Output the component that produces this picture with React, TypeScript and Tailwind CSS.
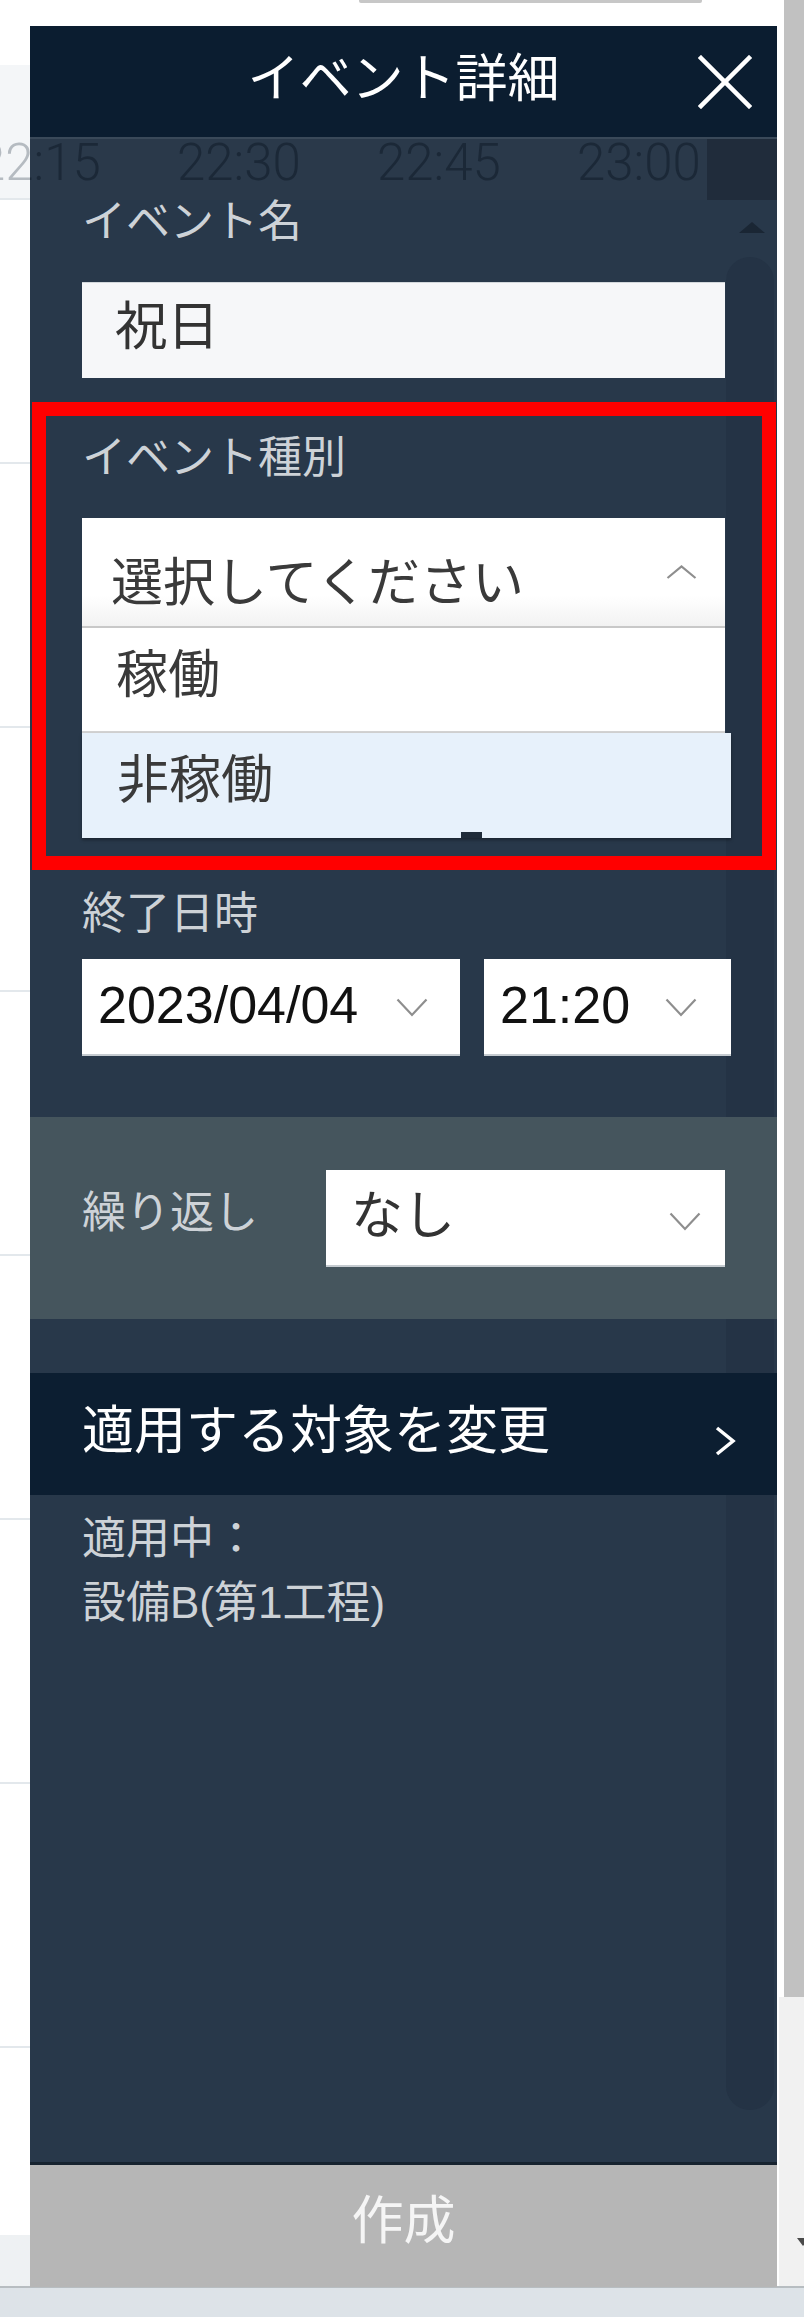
import React from "react";

const JP = "font-['Liberation_Sans','Noto_Sans_CJK_JP',sans-serif]";

function ChevDown({ className = "" }: { className?: string }) {
  return (
    <svg width="32" height="19" viewBox="0 0 32 19" className={`shrink-0 ${className}`}>
      <polyline points="1.5,1.5 16,17 30.5,1.5" fill="none" stroke="#8e8e8e" strokeWidth="2.2" />
    </svg>
  );
}

function ChevUp({ className = "" }: { className?: string }) {
  return (
    <svg width="31" height="14" viewBox="0 0 31 14" className={`shrink-0 ${className}`}>
      <polyline points="1.5,13 15.5,1.5 29.5,13" fill="none" stroke="#8e8e8e" strokeWidth="2.2" />
    </svg>
  );
}

function PageRow() {
  return <div className="h-[264px] shrink-0 border-b-2 border-[#e3e8ec]" />;
}

export default function App() {
  return (
    <div className={`relative h-[2317px] w-[804px] overflow-hidden bg-white ${JP}`}>
      {/* page behind the drawer */}
      <div className="flex h-[2286px]">
        <div className="flex min-w-0 flex-1 flex-col">
          <div className="h-[65px] shrink-0">
            <div className="ml-[359px] h-[3px] w-[343px] rounded-b-[2px] bg-[#c7c7c7]" />
          </div>
          <div className="h-[135px] shrink-0 overflow-hidden border-b-2 border-[#e3e8ec] bg-[#f4f6f8]">
            <div className="-ml-[23px] mt-[72px] flex font-['Roboto',sans-serif] text-[51px] font-light leading-[51px] text-[#b5bbc1]">
              <span className="w-[200px] shrink-0">22:15</span>
              <span className="w-[200px] shrink-0">22:30</span>
              <span className="w-[200px] shrink-0">22:45</span>
              <span className="w-[200px] shrink-0">23:00</span>
            </div>
          </div>
          <PageRow />
          <PageRow />
          <PageRow />
          <PageRow />
          <PageRow />
          <PageRow />
          <PageRow />
          <div className="h-[187px] shrink-0" />
          <div className="flex-1 bg-[#eef1f3]" />
        </div>
        <div className="flex w-[27px] shrink-0 flex-col">
          <div className="flex h-[1997px] shrink-0">
            <div className="w-[7px] bg-white" />
            <div className="flex-1 bg-[#c1c1c1]" />
          </div>
          <div className="relative flex-1 border-l-2 border-white bg-[#f1f1f1]">
            <div className="absolute left-[18px] top-[241px] h-0 w-0 border-x-[6px] border-t-[8px] border-x-transparent border-t-[#4a4a4a]" />
          </div>
        </div>
      </div>
      <div className="h-[31px] border-t-2 border-[#b7bdc1] bg-[#dde3e8]" />

      {/* drawer panel */}
      <div className="absolute left-[30px] top-[26px] flex h-[2261px] w-[747px] flex-col">
        <header className="grid h-[111px] shrink-0 grid-cols-[1fr_auto_1fr] items-center bg-[#0b1d30]">
          <div />
          <h1 className="mb-[6px] text-[52px] font-normal leading-[52px] text-white">イベント詳細</h1>
          <button className="mr-[25px] justify-self-end" aria-label="閉じる">
            <svg width="54" height="54" viewBox="0 0 54 54">
              <line x1="3" y1="3" x2="51" y2="51" stroke="#ffffff" strokeWidth="4.5" strokeLinecap="square" />
              <line x1="51" y1="3" x2="3" y2="51" stroke="#ffffff" strokeWidth="4.5" strokeLinecap="square" />
            </svg>
          </button>
        </header>
        <div className="h-[2px] shrink-0 bg-[#3a4959]" />
        <div className="flex h-[61px] shrink-0 overflow-hidden bg-[#2a394a]">
          <div className="-ml-[53px] -mt-[2px] flex font-['Roboto',sans-serif] text-[51px] font-light leading-[51px] text-[#1b2837]">
            <span className="w-[200px] shrink-0">22:15</span>
            <span className="w-[200px] shrink-0">22:30</span>
            <span className="w-[200px] shrink-0">22:45</span>
            <span className="w-[130px] shrink-0">23:00</span>
          </div>
          <div className="flex-1 bg-[#202c3b]" />
        </div>

        <div className="relative isolate flex min-h-0 flex-1 flex-col bg-[#28384a]">
          <div className="absolute left-[709px] top-[22px] -z-10 h-0 w-0 border-x-[13px] border-b-[11px] border-x-transparent border-b-[#1a2634]" />
          <div className="absolute left-[696px] top-[57px] -z-10 h-[1853px] w-[48px] rounded-full bg-[#243345]" />

          <div className="ml-[52px] text-[44px] leading-[44px] text-[#cdd2d7]">イベント名</div>
          <div className="mx-[52px] mt-[38px] h-[96px] shrink-0 border-t border-[#d3d8dc] bg-[#f6f7f9] pl-[33px] pt-[18px] text-[52px] leading-[52px] text-[#333333]">
            祝日
          </div>

          <div className="ml-[2px] mr-[1px] mt-[24px] shrink-0 border-[14px] border-[#ff0000] pb-[18px] pl-[36px] pr-[37px] pt-[20px]">
            <div className="text-[44px] leading-[44px] text-[#cdd2d7]">イベント種別</div>
            <div className="mt-[38px] flex h-[108px] items-start justify-between bg-[linear-gradient(#ffffff_72%,#f2f2f2)] pl-[29px] pr-[28px]">
              <span className="mt-[39px] text-[52px] leading-[52px] text-[#3a3a3a]">選択してください</span>
              <ChevUp className="mt-[47px]" />
            </div>
            <div className="h-[2px] bg-[#c8c8c8]" />
            <div className="h-[103px] bg-white pl-[34px] pt-[21px] text-[52px] leading-[52px] text-[#3a3a3a]">稼働</div>
            <div className="h-[2px] bg-[#d3d3d3]" />
            <div className="relative -mr-[6px] h-[105px] bg-[#e7f1fb] pl-[35px] pt-[21px] text-[52px] leading-[52px] text-[#3a3a3a] shadow-[0_2px_3px_rgba(0,0,0,0.35)]">
              非稼働
              <div className="absolute bottom-0 left-[379px] h-[6px] w-[21px] bg-[#1f2b39]" />
            </div>
          </div>

          <div className="ml-[52px] mt-[22px] text-[44px] leading-[44px] text-[#cdd2d7]">終了日時</div>
          <div className="ml-[52px] mt-[23px] flex h-[97px] shrink-0">
            <div className="flex w-[378px] items-start justify-between border-b-2 border-[#c5cbd0] bg-white pl-[16px] pr-[32px]">
              <span className="mt-[20px] text-[52px] leading-[52px] text-[#111111]">2023/04/04</span>
              <ChevDown className="mt-[39px]" />
            </div>
            <div className="ml-[24px] flex w-[247px] items-start justify-between border-b-2 border-[#c5cbd0] bg-white pl-[16px] pr-[34px]">
              <span className="mt-[20px] text-[52px] leading-[52px] text-[#111111]">21:20</span>
              <ChevDown className="mt-[39px]" />
            </div>
          </div>

          <div className="mt-[61px] flex h-[202px] shrink-0 items-start bg-[#45555d] pl-[52px] pr-[52px] pt-[53px]">
            <span className="mt-[21px] text-[44px] leading-[44px] text-[#cdd2d7]">繰り返し</span>
            <div className="ml-auto flex h-[97px] w-[399px] items-start justify-between border-b-2 border-[#c5cbd0] bg-white pl-[25px] pr-[24px]">
              <span className="mt-[20px] text-[52px] leading-[52px] text-[#333333]">なし</span>
              <ChevDown className="mt-[42px]" />
            </div>
          </div>

          <div className="mt-[54px] flex h-[122px] shrink-0 items-start justify-between bg-[#0c1e31] pl-[52px] pr-[40px]">
            <span className="mt-[32px] text-[52px] leading-[52px] text-white">適用する対象を変更</span>
            <svg width="24" height="30" viewBox="0 0 24 30" className="mt-[53px] shrink-0">
              <polyline points="4,2 20,15 4,28" fill="none" stroke="#ffffff" strokeWidth="3.5" />
            </svg>
          </div>
          <div className="ml-[52px] mt-[12px] text-[44px] leading-[64px] text-[#cdd2d7]">
            <div>適用中：</div>
            <div>設備B(第1工程)</div>
          </div>
        </div>

        <div className="h-[3px] shrink-0 bg-[#17232f]" />
        <button className="flex h-[122px] shrink-0 items-center justify-center bg-[#b6b6b6] pb-[10px] text-[52px] leading-[52px] text-[#f5f5f5]">
          作成
        </button>
      </div>
    </div>
  );
}
